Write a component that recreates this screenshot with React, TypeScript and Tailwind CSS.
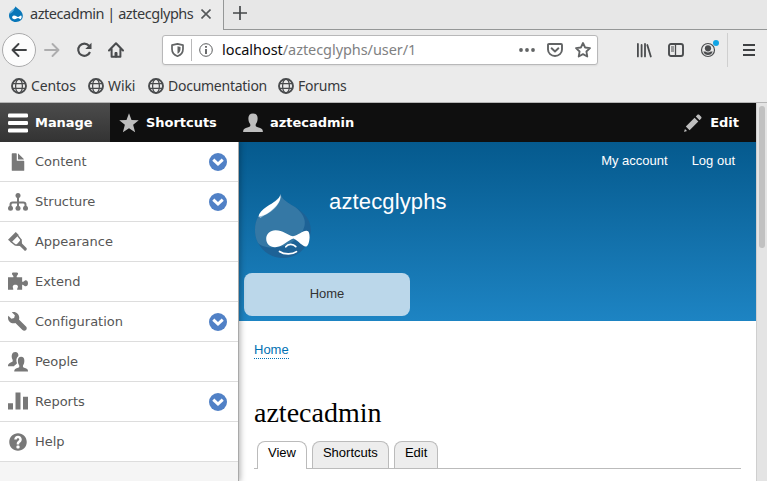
import type { ReactNode } from 'react'

const WRENCH =
  'M14.416 11.586l-.01-.008v-.001l-5.656-5.656c.15-.449.252-.921.252-1.421 0-2.485-2.016-4.5-4.502-4.5-.505 0-.981.102-1.434.255l2.431 2.431-.588 2.196-2.196.588-2.445-2.445c-.162.464-.268.956-.268 1.475 0 2.486 2.014 4.5 4.5 4.5.5 0 .972-.102 1.421-.251l5.667 5.665c.781.781 2.047.781 2.828 0s.781-2.047 0-2.828z'
const HELP =
  'M8.002 1c-3.868 0-7.002 3.134-7.002 7s3.134 7 7.002 7c3.865 0 7-3.134 7-7s-3.135-7-7-7zm3 5c0 .551-.16 1.085-.477 1.586l-.158.22c-.07.093-.189.241-.361.393-.168.148-.35.299-.545.447l-.203.189-.141.129-.096.17-.021.235v.63h-2.001v-.704c.026-.396.078-.73.204-.999.125-.269.271-.498.439-.688l.225-.21-.01-.015.176-.14.137-.128c.186-.139.357-.277.516-.417l.148-.18c.098-.152.168-.323.168-.518 0-.552-.447-1-1.001-1-.553 0-1.002.448-1.002 1h-2c0-1.657 1.343-3 3.002-3 1.656 0 3 1.343 3 3zm-1.75 6.619c0 .344-.281.625-.625.625h-1.25c-.345 0-.626-.281-.626-.625v-1.238c0-.344.281-.625.626-.625h1.25c.344 0 .625.281.625.625v1.238z'
const PERSON =
  'M8 .3c2.500 0 3.700 1.600 3.700 3.900 0 1.900-.5 3.300-1.300 4.400-.4.6-.4 1.800.1 2.200.6.5 3.200 1 4.300 1.800.8.6 1.100 1.400 1.100 2.500H.1c0-1.100.3-1.900 1.100-2.500 1.100-.8 3.700-1.300 4.300-1.800.5-.4.5-1.600.1-2.200-.8-1.100-1.300-2.500-1.300-4.400C4.300 1.900 5.500.3 8 .3z'

function Icon({ children, className = 'size-5' }: { children: ReactNode; className?: string }) {
  return (
    <svg viewBox="0 0 16 16" className={'shrink-0 ' + className} fill="currentColor">
      {children}
    </svg>
  )
}

function Globe() {
  return (
    <svg viewBox="0 0 16 16" className="size-4 shrink-0" fill="none" stroke="#4a4c4e" strokeWidth="1.250">
      <circle cx="8" cy="8" r="7" strokeWidth="1.900" />
      <ellipse cx="8" cy="8" rx="3.400" ry="7" />
      <path d="M1.500 5.600h13M1.500 10.400h13" />
    </svg>
  )
}

function DrupalLogo() {
  return (
    <svg viewBox="0 0 58 65" className="h-[65px] w-[58px]">
      <path d="M26.600 0C28 6 34 8.500 41 13 51 19 56.800 26 56.800 36 56.800 52 44 64 29 64S1 52 1 36C1 25 6 18 13 13 20 8.500 26 7 26.600 0z" fill="#1d6296" />
      <path d="M26.600 0C28 6 34 8.500 41 13 49 19 52 26 50.500 32 48 42 38 51 25 53 16 54.500 7 53 3.800 48.500 1.500 44 1 40 1 36 1 25 6 18 13 13 20 8.500 26 7 26.600 0z" fill="#3578a5" />
      <path d="M26.600 2C27 5 25.500 9 21 14 15 20 10 21 6.500 24L4.500 22.500z" fill="#98bdd7" />
      <path d="M26.300 0C26 6 19 8.500 13 12.500 8 16 5 19 4.500 22.500 12 22 18.500 16 22.500 11.500 25.500 8 27 4 26.300 0z" fill="#fff" />
      <path d="M21.500 36.200C29 36.200 33 41 39 42.200 44.500 41 48 36.900 52.500 36.700 55 36.700 55.600 39.500 55.600 43.500 55.300 48.500 54 52.600 51.500 52.600 48.500 52.600 44.500 47 39.500 44.600 34 46 29 53.200 21 53.200 15.500 53.200 12.200 49.500 12.200 44.800 12.200 39.800 16 36.200 21.500 36.200z" fill="#fff" />
      <path d="M31.800 52.800C34 49.600 39 49.400 41.800 52.600M25.500 57.500C30 60.600 38.500 60.800 42.500 57.700" fill="none" stroke="#fff" strokeWidth="1.700" strokeLinecap="round" />
    </svg>
  )
}

const menu: { label: string; more?: boolean; icon: ReactNode }[] = [
  {
    label: 'Content',
    more: true,
    icon: (
      <path d="M12.502 7h-5c-.276 0-.502-.225-.502-.5v-5c0-.275-.225-.5-.5-.5h-3c-.276 0-.5.225-.5.5v13.029c0 .275.225.5.5.5h9.002c.275 0 .5-.225.5-.5v-7.029c0-.275-.225-.5-.5-.5zM8.502 6h4c.275 0 .34-.159.146-.354l-4.293-4.292c-.195-.195-.353-.129-.353.146v4c0 .275.225.5.5.5z" />
    ),
  },
  {
    label: 'Structure',
    more: true,
    icon: (
      <>
        <path d="M2 13V10.200Q2 8.400 3.800 8.400H12.200Q14 8.400 14 10.200V13M8 3v10" fill="none" stroke="currentColor" strokeWidth="1.600" />
        <circle cx="8" cy="2.800" r="2" />
        <circle cx="2" cy="13" r="2" />
        <circle cx="8" cy="13" r="2" />
        <circle cx="14" cy="13" r="2" />
      </>
    ),
  },
  {
    label: 'Appearance',
    icon: (
      <>
        <path d="M6.200 0L0 6.200 2.600 8.400 8.600 2.400z" />
        <path d="M2 7.300L5.800 10.400 7.500 10.200 10 7.500 10.200 6 7.300 2.300" fill="none" stroke="currentColor" strokeWidth="1.100" />
        <path d="M6.300 10.900L10.900 5.500 11.200 9.200 15 13Q15.400 14.800 13.600 15.200L9.500 11.200z" />
      </>
    ),
  },
  {
    label: 'Extend',
    icon: (
      <path d="M0 4.200H4.300C4.700 3.500 3.700 2.500 3.200 1.800 3 .8 3.500.3 4.300.3H7C7.900.3 8.300 1 8 1.800 7.500 2.500 6.600 3.500 7 4.200H11.300V7.800C12 8.200 12.600 7.300 13.600 6.700 15 6.300 16 7.300 16 9S15 11.700 13.600 11.300C12.600 10.700 12 9.800 11.300 10.200V14.200H7.300C7 13.300 8.300 12.500 7.900 11.200 7.300 9.900 4.500 9.900 3.900 11.200 3.500 12.500 4.500 13.300 4.200 14.200H0z" />
    ),
  },
  { label: 'Configuration', more: true, icon: <path d={WRENCH} /> },
  {
    label: 'People',
    icon: (
      <>
        <path d="M5.800 0C7.500 0 8.500 1.100 8.300 3.200 6.500 4.600 6.300 6.700 7.200 9 6.600 10 5.600 10.300 4.800 11.300H0C0 9.500.7 8.800 3.500 7.700 4 7 3.800 6.300 3.300 5.300 2.500 2.800 3.200 0 5.800 0z" />
        <g transform="translate(4.900 3.600) scale(.7 .8)">
          <path d={PERSON} />
        </g>
      </>
    ),
  },
  { label: 'Reports', more: true, icon: <path d="M0 9h4v5H0zM6 .3h4V14H6zM12 3.800h4V14h-4z" /> },
  { label: 'Help', icon: <path d={HELP} /> },
]

function Browser() {
  return (
    <header className="h-[103px] border-b border-[#b5b5b5] bg-[#ebebeb] font-['Noto_Sans',sans-serif] text-[#37393b]">
      <div className="flex h-[30px]">
        <div className="flex w-[223px] items-center pb-0.5 pl-2">
          <svg viewBox="0 0 16 17" className="h-[17px] w-4 shrink-0">
            <path d="M7.500.3C8.200 2.500 14.800 4 14.800 9.800 14.800 13.800 11.700 16 8 16S1 13.500 1 9.500C1 4.500 7.300 3.500 7.500.3z" fill="#0876b8" />
            <path d="M6.500 2.500C3.500 4 2 5.500 1.500 8 4 7 6 5 6.500 2.500z" fill="#5badde" />
            <path d="M6 9.500C8 9.500 9 11 10 11S12 9.500 13 9.500C14.200 10 13.500 13 12.500 13.200 11.500 13 11 12 10 12S8 13.500 6 13.200C3.500 12.500 3.500 10 6 9.500z" fill="#fff" />
          </svg>
          <span className="ml-1.5 w-[163px] whitespace-nowrap text-[14.5px] tracking-[-0.46px]">aztecadmin | aztecglyphs</span>
          <svg viewBox="0 0 10 10" className="ml-2 size-2.5 shrink-0" stroke="#55585a" strokeWidth="1.600">
            <path d="M.5.5l9 9M9.500.5l-9 9" />
          </svg>
        </div>
        <div className="flex flex-1 items-center border-b border-l border-[#959797] bg-[#e7e7e7] pb-1 pl-[9px]">
          <svg viewBox="0 0 14 14" className="size-3.5" stroke="#45484a" strokeWidth="1.700">
            <path d="M7 0v14M0 7h14" />
          </svg>
        </div>
      </div>
      <div className="flex h-10 items-center pl-0.5">
        <div className="flex size-[34px] items-center justify-center rounded-full border border-[#aaaaab] bg-[#fcfcfc]">
          <svg viewBox="0 0 16 16" className="size-4" fill="none" stroke="#3f4143" strokeWidth="1.900" strokeLinecap="round" strokeLinejoin="round">
            <path d="M15 8H1.500M7.500 2L1.500 8l6 6" />
          </svg>
        </div>
        <svg viewBox="0 0 16 16" className="ml-2 size-4" fill="none" stroke="#adadae" strokeWidth="1.900" strokeLinecap="round" strokeLinejoin="round">
          <path d="M1 8h13.500M8.500 2l6 6-6 6" />
        </svg>
        <svg viewBox="0 0 16 16" className="ml-4 size-4" fill="none" stroke="#4a4c4e" strokeWidth="2.100">
          <path d="M13 3.800A6.100 6.100 0 1 0 14 10" />
          <path d="M15.500.8V7H9.300z" fill="#4a4c4e" stroke="none" />
        </svg>
        <svg viewBox="0 0 16 16" className="ml-4 size-4" fill="none" stroke="#4a4c4e" strokeWidth="2" strokeLinecap="round" strokeLinejoin="round">
          <path d="M1 8.500L8 1.300l7 7.200M3.600 7v7.800h8.800V7" />
          <path d="M7 14.500v-4h2v4z" fill="#4a4c4e" strokeWidth="1" />
        </svg>
        <div className="ml-[38px] flex h-[30px] w-[436px] items-center rounded-[3px] border border-[#b8b8b9] bg-white pl-2 shadow-[0_1px_2px_rgba(0,0,0,0.07)]">
          <svg viewBox="0 0 13 14" className="h-3.5 w-[13px]" fill="none" stroke="#626465" strokeWidth="1.700" strokeLinejoin="round">
            <path d="M1 2.200L6.500.9 12 2.200V6C12 9.500 10 12 6.500 13.200 3 12 1 9.500 1 6z" />
            <path d="M6.500 3.300L9.500 4v2C9.500 8 8.500 9.800 6.500 10.800z" fill="#626465" stroke="none" />
          </svg>
          <i className="ml-[7px] h-[22px] w-px bg-[#b8b8b9]" />
          <svg viewBox="0 0 14 14" className="ml-[7px] size-3.5" fill="none" stroke="#5b5d5e">
            <circle cx="7" cy="7" r="6.300" />
            <path d="M7 3v1.800M7 6v5" strokeWidth="1.800" />
          </svg>
          <span className="ml-[9px] w-[297px] whitespace-nowrap text-[14.5px] tracking-[-0.06px] text-[#808182]">
            <span className="text-[#0c0c0d]">localhost</span>/aztecglyphs/user/1
          </span>
          <svg viewBox="0 0 16 4" className="h-1 w-4" fill="#626465">
            <circle cx="2" cy="2" r="1.900" />
            <circle cx="8" cy="2" r="1.900" />
            <circle cx="14" cy="2" r="1.900" />
          </svg>
          <svg viewBox="0 0 16 14" className="ml-3 h-3.5 w-4" fill="none" stroke="#626465" strokeWidth="1.900" strokeLinecap="round" strokeLinejoin="round">
            <path d="M2 1h12q1 0 1 1v4.500a7 6.500 0 0 1-14 0V2q0-1 1-1z" />
            <path d="M4.600 5.300L8 8.500l3.400-3.200" />
          </svg>
          <svg viewBox="0 0 16 16" className="ml-3 size-4" fill="none" stroke="#626465" strokeWidth="1.800" strokeLinejoin="round">
            <path d="M8 1l2.100 4.500 4.900.6-3.600 3.400.9 5L8 12.100 3.700 14.500l.9-5L1 6.100l4.900-.6z" />
          </svg>
        </div>
        <svg viewBox="0 0 16 16" className="ml-[38px] size-4" stroke="#4a4c4e" strokeWidth="1.800" strokeLinecap="round">
          <path d="M1.900 1.900v12.500M5.600 3v11.400M9 1.900v12.500M11.300 3l3.500 11.500" />
        </svg>
        <svg viewBox="0 0 16 14" className="ml-4 h-3.5 w-4" fill="none" stroke="#4a4c4e" strokeWidth="1.900">
          <rect x="1" y="1" width="14" height="12" rx="2" />
          <path d="M7.500 1v12" strokeWidth="1.300" />
          <path d="M3 4h3M3 6h3M3 8h3" strokeWidth="1" />
        </svg>
        <svg viewBox="0 0 20 20" className="ml-[15px] size-5" fill="none">
          <circle cx="9" cy="10" r="6.500" stroke="#4a4c4e" strokeWidth="1.200" />
          <circle cx="9" cy="8.300" r="3.100" fill="#4a4c4e" />
          <path d="M4.300 11.500h2q2.700 1.800 5.400 0h2q-1.200 3.500-4.700 3.500T4.300 11.500z" fill="#4a4c4e" />
          <circle cx="17" cy="3" r="3" fill="#12a5e5" />
        </svg>
        <i className="ml-2 h-[34px] w-px bg-[#cfcfcf]" />
        <svg viewBox="0 0 12 12" className="ml-[15px] h-3 w-3" stroke="#3f4143" strokeWidth="1.900">
          <path d="M0 1h12M0 6h12M0 11h12" />
        </svg>
      </div>
      <nav className="flex h-8 items-center pl-[11px] text-[14px]">
        <Globe />
        <span className="-mt-0.5 ml-1 w-[57px] tracking-[-0.15px]">Centos</span>
        <Globe />
        <span className="-mt-0.5 ml-1 w-10 tracking-[-0.1px]">Wiki</span>
        <Globe />
        <span className="-mt-0.5 ml-1 w-[110px] tracking-[-0.26px]">Documentation</span>
        <Globe />
        <span className="-mt-0.5 ml-1 tracking-[-0.25px]">Forums</span>
      </nav>
    </header>
  )
}

function AdminBar() {
  return (
    <div className="flex h-[39px] items-center bg-[#0f0f0f] font-['DejaVu_Sans',sans-serif] text-[13px] font-bold text-white">
      <div className="flex h-full w-[110px] items-center bg-linear-to-b from-[#4c4c4c] to-[#333] pl-2">
        <svg viewBox="0 0 20 20" className="size-5" fill="#fff">
          <rect y=".5" width="20" height="4" rx="1.300" />
          <rect y="8" width="20" height="4" rx="1.300" />
          <rect y="15.500" width="20" height="4" rx="1.300" />
        </svg>
        <span className="ml-[7px] tracking-[-0.05px]">Manage</span>
      </div>
      <Icon className="ml-[9px] size-5 text-[#bebebe]">
        <path d="M8 .2l2 5.400 5.800.2-4.500 3.600 1.600 6L8 12.200l-4.900 3.200 1.600-6L.2 5.800 6 5.600z" />
      </Icon>
      <span className="ml-[7px] w-[97px] tracking-[-0.03px]">Shortcuts</span>
      <Icon className="size-5 text-[#bebebe]">
        <path d={PERSON} />
      </Icon>
      <span className="ml-[7px] flex-1 tracking-[-0.03px]">aztecadmin</span>
      <Icon className="size-5 text-[#bebebe]">
        <path d="M14.545 3.042l-1.586-1.585c-.389-.389-1.025-.389-1.414 0l-1.293 1.293 3 3 1.293-1.293c.389-.389.389-1.026 0-1.415z" />
        <rect x="5.129" y="3.800" width="4.243" height="9.899" transform="matrix(-.707 -.707 .707 -.707 6.189 20.064)" />
        <path d="M.908 14.775c-.087.262.055.397.316.312l2.001-.667-1.650-1.646-.667 2.001z" />
      </Icon>
      <span className="ml-[7px] mr-[17px]">Edit</span>
    </div>
  )
}

function Tray() {
  return (
    <aside className="z-10 w-[239px] shrink-0 border-r border-[#a9a9a9] bg-[#f5f5f5] font-['DejaVu_Sans',sans-serif] text-[13px] tracking-[-0.02px] text-[#565656] shadow-[0_0_6px_1px_rgba(0,0,0,0.33)]">
      {menu.map((m) => (
        <div key={m.label} className="flex h-10 items-center border-b border-[#ddd] bg-white pl-2 pr-[11px]">
          <Icon className="size-5 text-[#787878]">{m.icon}</Icon>
          <span className="ml-[7px] flex-1">{m.label}</span>
          {m.more && (
            <svg viewBox="0 0 18 18" className="size-[18px]">
              <circle cx="9" cy="9" r="9" fill="#5181c6" />
              <path d="M4.300 6.700L9 11 13.700 6.700" fill="none" stroke="#fff" strokeWidth="3" />
            </svg>
          )}
        </div>
      ))}
    </aside>
  )
}

function Site() {
  return (
    <main className="min-w-0 flex-1 bg-white font-['Liberation_Sans',sans-serif] text-[13px]">
      <section className="h-[179px] bg-linear-to-b from-[#055a8e] to-[#1d84c3] text-[#fffeff]">
        <div className="flex h-[52px] justify-end gap-6 pr-[21px] pt-[11px] leading-4">
          <a>My account</a>
          <a>Log out</a>
        </div>
        <div className="flex h-[79px] pl-[15px]">
          <DrupalLogo />
          <span className="-mt-1.5 ml-[17px] text-[22px] leading-7 tracking-[0.14px]">aztecglyphs</span>
        </div>
        <div className="ml-[5px] h-[43px] w-[166px] rounded-lg bg-[#bbd7ea] pt-[13px] text-center leading-4 text-[#333]">Home</div>
      </section>
      <div className="px-[15px] pt-[21px]">
        <a className="block h-[17px] w-fit border-b border-dotted border-[#0071b3] leading-4 text-[#0071b3]">Home</a>
        <h1 className="mt-9 h-[46px] font-['Liberation_Serif',serif] text-[28px] leading-9 text-black">aztecadmin</h1>
        <div className="flex h-7 items-end gap-[5px] border-b border-[#bbb] pl-[3px] leading-[22px] text-black">
          <span className="-mb-px h-7 rounded-t-lg border border-b-0 border-[#bbb] bg-white px-2.5">View</span>
          <span className="h-[27px] rounded-t-lg border border-b-0 border-[#bbb] bg-[#ededed] px-2.5">Shortcuts</span>
          <span className="h-[27px] rounded-t-lg border border-b-0 border-[#bbb] bg-[#ededed] px-2.5">Edit</span>
        </div>
      </div>
    </main>
  )
}

export default function App() {
  return (
    <div className="flex h-[481px] w-[767px] flex-col overflow-hidden">
      <Browser />
      <div className="flex min-h-0 flex-1">
        <div className="flex w-[756px] flex-col">
          <AdminBar />
          <div className="flex min-h-0 flex-1 overflow-hidden">
            <Tray />
            <Site />
          </div>
        </div>
        <div className="flex w-[11px] justify-center border-l border-[#cfcfcf] bg-[#e4e4e4] pt-[3px]">
          <i className="h-[142px] w-1.5 rounded-full bg-[#c1c1c1]" />
        </div>
      </div>
    </div>
  )
}
